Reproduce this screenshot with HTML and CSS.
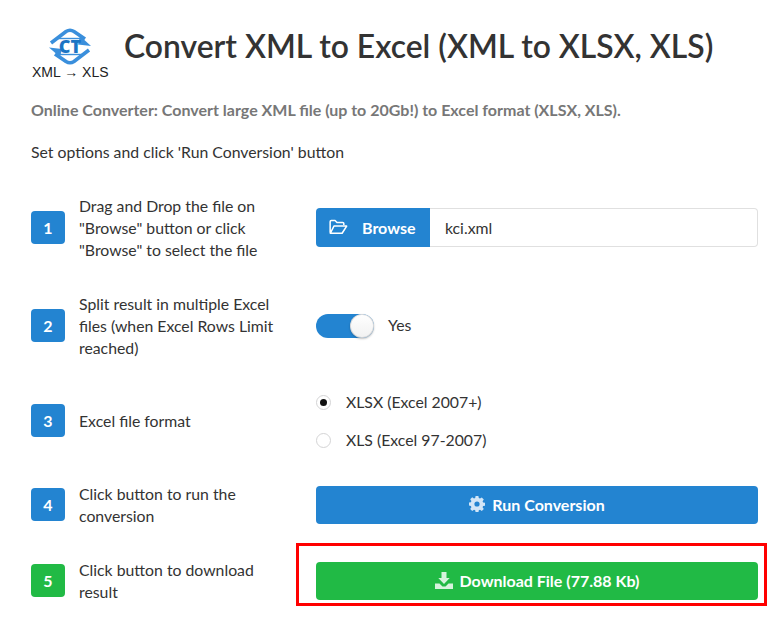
FILE: index.html
```html
<!DOCTYPE html>
<html lang="en">
  <head>
    <meta charset="UTF-8" />
    <title>Convert XML to Excel</title>
    <link rel="stylesheet" href="styles.css">
  </head>
  <body>
    <div class="container">
      <div class="header">
        <div class="logo">
          <svg width="44" height="37" viewBox="0 0 44 37">
            <path d="M3 15 L18 3.5 Q22 1 26 3.5 L37 11" fill="none" stroke="#3a8fdc" stroke-width="3.6"/>
            <path d="M41 22 L26 33.5 Q22 36 18 33.5 L7 26" fill="none" stroke="#3a8fdc" stroke-width="3.6"/>
            <path d="M8 10.5 H36" fill="none" stroke="#3a8fdc" stroke-width="1.4"/>
            <path d="M36 26.5 H8" fill="none" stroke="#3a8fdc" stroke-width="1.4"/>
            <path d="M32 8 L43 18 L30 16.5 Z" fill="#3a8fdc"/>
            <path d="M12 29 L1 19.5 L14 21 Z" fill="#3a8fdc"/>
            <text x="22" y="24.5" class="logo-text" text-anchor="middle">CT</text>
          </svg>
          <div class="logo-label">XML → XLS</div>
        </div>
        <h1>Convert XML to Excel (XML to XLSX, XLS)</h1>
      </div>
      <p class="intro">Online Converter: Convert large XML file (up to 20Gb!) to Excel format (XLSX, XLS).</p>
      <p class="hint">Set options and click 'Run Conversion' button</p>

      <div class="step step-1">
        <div class="num">1</div>
        <div class="label">Drag and Drop the file on "Browse" button or click "Browse" to select the file</div>
        <div class="control">
          <div class="file-input">
            <button class="browse">
              <svg width="19" height="16" viewBox="0 0 20 16"><path d="M1.2 14V2.4c0-.7.5-1.2 1.2-1.2h4l2 2h6c.7 0 1.2.5 1.2 1.2V6 M1.4 14.6h12.4L18.6 7H5.2Z" fill="none" stroke="#fff" stroke-width="1.6" stroke-linejoin="round"/></svg>
              Browse
            </button>
            <div class="file-name">kci.xml</div>
          </div>
        </div>
      </div>

      <div class="step step-2">
        <div class="num">2</div>
        <div class="label">Split result in multiple Excel files (when Excel Rows Limit reached)</div>
        <div class="control toggle-row">
          <div class="toggle"><div class="knob"></div></div>
          <span class="toggle-text">Yes</span>
        </div>
      </div>

      <div class="step step-3">
        <div class="num">3</div>
        <div class="label">Excel file format</div>
        <div class="control radios">
          <div class="radio-row"><span class="radio checked"></span>XLSX (Excel 2007+)</div>
          <div class="radio-row"><span class="radio"></span>XLS (Excel 97-2007)</div>
        </div>
      </div>

      <div class="step step-4">
        <div class="num">4</div>
        <div class="label">Click button to run the conversion</div>
        <div class="control">
          <button class="action run">
            <svg width="16" height="16" viewBox="0 0 16 16"><path fill="#d3e6f7" fill-rule="evenodd" d="M6.6 0h2.8l.4 2.1 1.2.5 1.8-1.2 2 2-1.2 1.8.5 1.2 2.1.4v2.8l-2.1.4-.5 1.2 1.2 1.8-2 2-1.8-1.2-1.2.5-.4 2.1H6.6l-.4-2.1-1.2-.5-1.8 1.2-2-2 1.2-1.8-.5-1.2L-.2 9.4V6.6l2.1-.4.5-1.2-1.2-1.8 2-2L5 2.6l1.2-.5ZM8 5.4a2.6 2.6 0 1 0 0 5.2 2.6 2.6 0 0 0 0-5.2Z"/></svg>
            Run Conversion
          </button>
        </div>
      </div>

      <div class="step step-5">
        <div class="num green">5</div>
        <div class="label">Click button to download result</div>
        <div class="control">
          <div class="highlight">
            <button class="action download">
              <svg width="18" height="17" viewBox="0 0 18 17"><path fill="#d6f3dd" d="M6.5 0h5v6h3.2L9 12 3.3 6h3.2ZM0 11.5h4.5L7.5 14.5h3l3-3H18V17H0Z"/></svg>
              Download File (77.88 Kb)
            </button>
          </div>
        </div>
      </div>
    </div>
  </body>
</html>
```

FILE: styles.css
```css
body {
  font-family: "Lato", sans-serif;
  font-size: 15.8px;
  line-height: 22px;
  color: #333;
  background: white;
  margin: 0;
}
.container {
  width: 727px;
  margin-left: 31px;
  padding-top: 25px;
}
.header {
  display: flex;
  align-items: flex-start;
  height: 64px;
}
.logo {
  width: 93px;
  display: flex;
  flex-direction: column;
  align-items: flex-start;
}
.logo svg {
  margin: 3px 0 0 17px;
}
.logo-text {
  font-family: "Open Sans", sans-serif;
  font-weight: 800;
  font-size: 18px;
  fill: #1b75c4;
}
.logo-label {
  font-family: "Liberation Sans", sans-serif;
  font-size: 14px;
  line-height: 16px;
  color: #222;
  margin-top: -1px;
  margin-left: 1px;
}
h1 {
  margin: -1px 0 0;
  font-size: 31.85px;
  line-height: 44px;
  font-weight: 600;
  color: #333;
}
.intro {
  margin: 10px 0 0;
  font-size: 16px;
  font-weight: 700;
  color: #777;
}
.hint {
  margin: 20px 0 0;
}
.step {
  display: flex;
  align-items: center;
}
.step-1 {
  margin-top: 32px;
  height: 66px;
}
.step-2 {
  margin-top: 32px;
  height: 66px;
}
.step-3 {
  margin-top: 24px;
  height: 76px;
}
.step-4 {
  margin-top: 24px;
  height: 44px;
}
.step-5 {
  margin-top: 16px;
  height: 63px;
  align-items: flex-start;
}
.step-5 .num {
  margin-top: 21px;
}
.step-5 .label {
  margin-top: 16px;
}
.num {
  width: 34px;
  height: 33px;
  flex-shrink: 0;
  background: #2384d1;
  color: white;
  font-weight: 700;
  font-size: 16px;
  line-height: 33px;
  text-align: center;
  border-radius: 4px;
  margin-right: 14px;
  margin-bottom: 2px;
}
.step-5 .num {
  margin-bottom: 0;
}
.num.green {
  background: #21ba45;
}
.label {
  width: 205px;
  flex-shrink: 0;
  margin-right: 32px;
}
.control {
  width: 442px;
}
.file-input {
  display: flex;
  height: 39px;
  margin-bottom: 2px;
}
.browse {
  width: 114px;
  background: #2384d1;
  color: white;
  border: none;
  border-radius: 4px 0 0 4px;
  font-family: inherit;
  font-size: 16px;
  font-weight: 700;
  display: flex;
  align-items: center;
  gap: 14px;
  padding: 0 0 0 13px;
}
.file-name {
  flex: 1;
  border: 1px solid #e0e0e0;
  border-left: none;
  border-radius: 0 4px 4px 0;
  line-height: 38px;
  padding-left: 15px;
}
.toggle-row {
  display: flex;
  align-items: center;
  gap: 14px;
}
.toggle {
  width: 58px;
  height: 24px;
  background: #2384d1;
  border-radius: 12px;
  display: flex;
  justify-content: flex-end;
}
.toggle-text {
  margin-bottom: 2px;
}
.knob {
  width: 24px;
  height: 24px;
  border-radius: 50%;
  background: linear-gradient(#fff, #f1f1f1);
  box-shadow: 0 1px 2px rgba(0, 0, 0, 0.25), 0 0 0 1px rgba(34, 36, 38, 0.15) inset;
}
.radios {
  display: flex;
  flex-direction: column;
  gap: 16px;
}
.radio-row {
  display: flex;
  align-items: center;
  gap: 15px;
}
.radio {
  width: 15px;
  height: 15px;
  border: 1px solid #d4d4d5;
  border-radius: 50%;
  box-sizing: border-box;
  display: flex;
  align-items: center;
  justify-content: center;
}
.radio.checked::after {
  content: "";
  width: 7px;
  height: 7px;
  background: #111;
  border-radius: 50%;
}
.action {
  width: 100%;
  height: 38px;
  border: none;
  border-radius: 4px;
  color: white;
  font-family: inherit;
  font-size: 16px;
  font-weight: 700;
  display: flex;
  align-items: center;
  justify-content: center;
  gap: 7px;
  padding: 0 0 2px;
}
.run {
  background: #2384d1;
}
.download {
  background: #21ba45;
}
.highlight {
  border: 3px solid #f00;
  padding: 16px 6px 3px 17px;
  margin: 0 -9px 0 -20px;
  height: 63px;
  box-sizing: border-box;
}
```
